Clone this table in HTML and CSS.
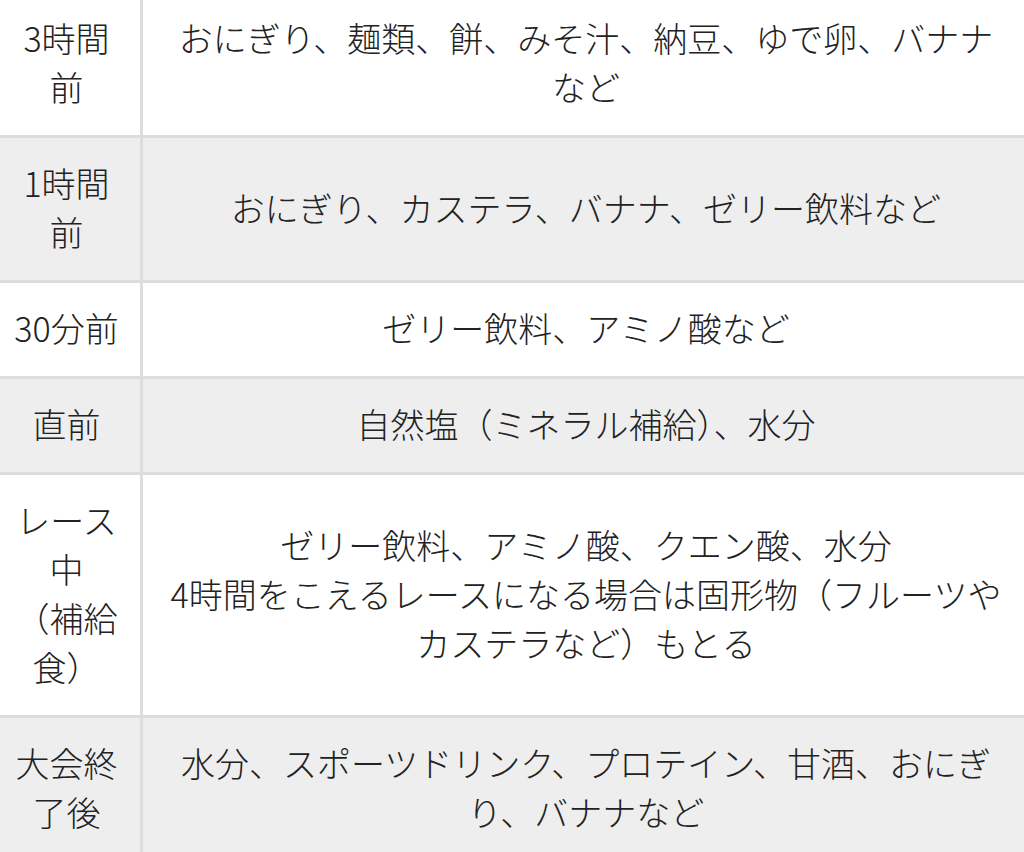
FILE: index.html
```html
<!DOCTYPE html>
<html lang="ja">
<head>
<meta charset="utf-8">
<title>補給食</title>
<link rel="stylesheet" href="styles.css">
</head>
<body>
<table class="food-table">
  <tbody>
    <tr class="row">
      <td class="when">3時間前</td>
      <td class="what">おにぎり、麺類、餅、みそ汁、納豆、ゆで卵、バナナなど</td>
    </tr>
    <tr class="row alt">
      <td class="when">1時間前</td>
      <td class="what">おにぎり、カステラ、バナナ、ゼリー飲料など</td>
    </tr>
    <tr class="row">
      <td class="when">30分前</td>
      <td class="what">ゼリー飲料、アミノ酸など</td>
    </tr>
    <tr class="row alt">
      <td class="when">直前</td>
      <td class="what">自然塩（ミネラル補給）、水分</td>
    </tr>
    <tr class="row">
      <td class="when">レース中<br>（補給食）</td>
      <td class="what">ゼリー飲料、アミノ酸、クエン酸、水分<br>4時間をこえるレースになる場合は固形物（フルーツやカステラなど）もとる</td>
    </tr>
    <tr class="row alt">
      <td class="when">大会終了後</td>
      <td class="what">水分、スポーツドリンク、プロテイン、甘酒、おにぎり、バナナなど</td>
    </tr>
  </tbody>
</table>
</body>
</html>
```
FILE: styles.css
```css
html, body {
  margin: 0;
  padding: 0;
  background: #ffffff;
  overflow: hidden;
}

.food-table {
  margin: -10px 0 0 -10px;
  width: 1042px;
  table-layout: fixed;
  border-collapse: separate;
  border-spacing: 3px;
  background: #dddddd;
  font-family: "Noto Sans CJK JP", "Noto Sans", sans-serif;
  font-weight: 300;
  font-size: 34px;
  line-height: 49px;
  color: #222222;
}

.food-table td {
  background: #ffffff;
  vertical-align: middle;
  text-align: center;
  padding: 20px 20px 24px;
}

.food-table .row.alt td {
  background: #eeeeee;
}

.food-table .when {
  width: 115px;
  padding-left: 16px;
  padding-right: 16px;
}

.food-table .what {
  padding-left: 21px;
  padding-right: 21px;
}
```
